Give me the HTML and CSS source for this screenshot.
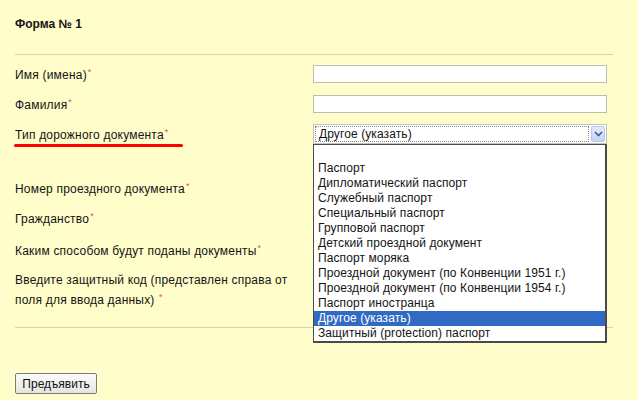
FILE: index.html
```html
<!DOCTYPE html>
<html lang="ru">
<head>
    <meta charset="UTF-8">
    <title>Форма № 1</title>
    <link rel="stylesheet" href="styles.css">
</head>
<body>
    <div class="form-page">
        <div class="form-title">Форма № 1</div>
        <div class="divider"></div>

        <div class="form-row row-1">
            <label>Имя (имена)<span class="req">*</span></label>
            <input type="text" class="field">
        </div>
        <div class="form-row row-2">
            <label>Фамилия<span class="req">*</span></label>
            <input type="text" class="field">
        </div>
        <div class="form-row row-3">
            <label class="marked">Тип дорожного документа<span class="req">*</span></label>
            <div class="select-box">
                <div class="select-value"><span>Другое (указать)</span></div>
                <div class="select-arrow">
                    <svg width="9" height="6" viewBox="0 0 9 6"><path d="M1 1 L4.5 4.5 L8 1" fill="none" stroke="#3d5a9e" stroke-width="1.6"/></svg>
                </div>
                <ul class="select-list">
                    <li>&nbsp;</li>
                    <li>Паспорт</li>
                    <li>Дипломатический паспорт</li>
                    <li>Служебный паспорт</li>
                    <li>Специальный паспорт</li>
                    <li>Групповой паспорт</li>
                    <li>Детский проездной документ</li>
                    <li>Паспорт моряка</li>
                    <li>Проездной документ (по Конвенции 1951 г.)</li>
                    <li>Проездной документ (по Конвенции 1954 г.)</li>
                    <li>Паспорт иностранца</li>
                    <li class="selected">Другое (указать)</li>
                    <li>Защитный (protection) паспорт</li>
                </ul>
            </div>
        </div>
        <div class="form-row row-4">
            <label>Номер проездного документа<span class="req">*</span></label>
        </div>
        <div class="form-row row-5">
            <label>Гражданство<span class="req">*</span></label>
        </div>
        <div class="form-row row-6">
            <label>Каким способом будут поданы документы<span class="req">*</span></label>
        </div>
        <div class="form-row row-7">
            <label>Введите защитный код (представлен справа от<br>поля для ввода данных) <span class="req">*</span></label>
        </div>

        <div class="divider bottom"></div>

        <button type="button" class="submit-button">Предъявить</button>
    </div>
</body>
</html>
```

FILE: styles.css
```css
body {
    margin: 0;
    padding: 0;
    background-color: #fffdca;
    font-family: "Liberation Sans", Arial, sans-serif;
    font-size: 12px;
    color: #141414;
}

.form-page {
    padding: 17px 0 0 15px;
    width: 598px;
}

.form-title {
    font-weight: bold;
    line-height: 14px;
    height: 37px;
}

.divider {
    height: 1px;
    background-color: #d9d5a8;
    margin-bottom: 4px;
}

.divider.bottom {
    margin-top: 15px;
    margin-bottom: 45px;
}

.form-row {
    display: grid;
    grid-template-columns: 298px 294px;
    align-items: center;
    height: 30px;
}

.form-row label {
    line-height: 17px;
    letter-spacing: 0.2px;
}

.row-4 {
    margin-top: 24px;
}

.row-6 {
    height: 34px;
}

.row-7 {
    height: 40px;
    padding-top: 5px;
    align-items: start;
}

.req {
    color: #e3503f;
    font-size: 9px;
    vertical-align: 4px;
    margin-left: 1px;
}

.marked {
    position: relative;
}

.marked::after {
    content: "";
    position: absolute;
    left: -1px;
    top: 20px;
    width: 169px;
    height: 3px;
    border-radius: 2px;
    background-color: #f00;
}

.field {
    box-sizing: border-box;
    width: 294px;
    height: 18px;
    margin: 0;
    border: 1px solid #bdbdb0;
    background-color: #fff;
}

.select-box {
    position: relative;
    box-sizing: border-box;
    width: 294px;
    height: 20px;
    border: 1px solid #c4c4b4;
    background-color: #fff;
    display: flex;
    letter-spacing: 0.1px;
}

.select-value {
    flex: 1;
    padding: 1px;
}

.select-value span {
    display: block;
    height: 14px;
    line-height: 14px;
    padding-left: 3px;
    border: 1px dotted #888;
}

.select-arrow {
    width: 14px;
    margin: 1px;
    border: 1px solid #b9c9ee;
    border-radius: 2px;
    background: linear-gradient(#e3ebfd, #c3d3f8);
    display: flex;
    align-items: center;
    justify-content: center;
    box-sizing: border-box;
}

.select-list {
    position: absolute;
    top: 19px;
    left: -1px;
    width: 294px;
    box-sizing: border-box;
    margin: 0;
    padding: 1px 0 0;
    list-style: none;
    background-color: #fff;
    border: 1px solid #4a4a4a;
    border-right-width: 2px;
    border-bottom-width: 2px;
    z-index: 2;
}

.select-list li {
    height: 15px;
    line-height: 15px;
    padding-left: 4px;
    white-space: nowrap;
}

.select-list li.selected {
    background-color: #316ac5;
    color: #fff;
}

.submit-button {
    font-family: "Liberation Sans", Arial, sans-serif;
    font-size: 12px;
    color: #111;
    height: 21px;
    width: 82px;
    padding: 0;
    border: 1px solid #7a7a7a;
    border-radius: 2px;
    background: linear-gradient(#fbfbfb, #e6e6e0);
}
```
